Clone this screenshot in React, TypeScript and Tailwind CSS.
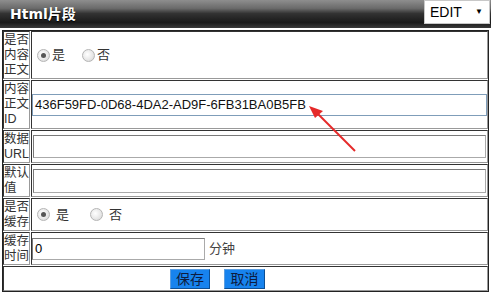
import React from 'react';

const cjk = { fontFamily: '"Liberation Sans", "Noto Sans CJK SC", sans-serif' };

const Radio: React.FC<{ checked?: boolean; className?: string }> = ({ checked, className }) => (
  <span className={`relative inline-flex h-[13px] w-[13px] shrink-0 items-center justify-center rounded-full border border-[#b5b5b5] bg-[radial-gradient(circle_at_40%_40%,#ffffff_0%,#e6e6e6_60%,#cfcfcf_100%)] ${className || ''}`}>
    {checked && <span className="h-[5px] w-[5px] rounded-full bg-[#555]" />}
  </span>
);

const Label: React.FC<{ lines: string[] }> = ({ lines }) => (
  <div className="flex w-[27px] shrink-0 flex-col justify-center overflow-hidden whitespace-nowrap border border-t-[#333] border-l-[#333] border-b-[#999] border-r-[#999] text-[12.5px] leading-[15px] text-[#333]">
    {lines.map((l) => (
      <span key={l}>{l}</span>
    ))}
  </div>
);

const Cell: React.FC<{ children?: React.ReactNode; className?: string }> = ({ children, className }) => (
  <div className={`flex flex-1 items-center border border-t-[#333] border-l-[#333] border-b-[#999] border-r-[#999] ${className || ''}`}>
    {children}
  </div>
);

const inputCls = 'border border-[#aaa] border-t-[#7a7a7a] border-l-[#7a7a7a] bg-white';

export default function App() {
  return (
    <div className="relative h-[294px] w-[491px] overflow-hidden bg-white" style={cjk}>
      <div className="flex h-[28px] items-start justify-between bg-[linear-gradient(to_bottom,#8e8e8e_0%,#6a6a6a_30%,#333_48%,#1a1a1a_80%,#3a3a3a_100%)]">
        <span
          className="ml-[10px] mt-[6px] text-[14px] font-bold leading-[16px] text-white [text-shadow:0_1px_1px_#000]"
          style={{ fontFamily: '"DejaVu Sans", "Noto Sans CJK SC", sans-serif' }}
        >
          Html片段
        </span>
        <div className="mr-[1px] flex h-[24px] w-[66px] items-center border border-[#c8c8c8] bg-white pl-[5px]">
          <span className="text-[14px] leading-[16px] text-black">EDIT</span>
          <span className="ml-[13px] text-[8px] leading-[8px] text-black">▼</span>
        </div>
      </div>

      <div className="mx-[2px] mt-[2px] flex w-[487px] flex-col gap-[1px] border border-[#222]">
        <div className="flex h-[48px] gap-[1px]">
          <Label lines={['是否', '内容', '正文']} />
          <Cell className="pl-[5px] text-[13px] text-[#333]">
            <Radio checked />
            <span className="ml-[2px]">是</span>
            <Radio className="ml-[17px]" />
            <span className="ml-[2px]">否</span>
          </Cell>
        </div>

        <div className="flex h-[49px] gap-[1px]">
          <Label lines={['内容', '正文', 'ID']} />
          <Cell>
            <div className="flex h-[22px] w-full items-center border border-[#7f9db9] bg-white pl-[2px] text-[13px] text-[#111]">
              436F59FD-0D68-4DA2-AD9F-6FB31BA0B5FB
            </div>
          </Cell>
        </div>

        <div className="flex h-[33px] gap-[1px]">
          <Label lines={['数据', 'URL']} />
          <Cell className="px-[1px]">
            <div className={`h-[23px] w-full ${inputCls}`} />
          </Cell>
        </div>

        <div className="flex h-[33px] gap-[1px]">
          <Label lines={['默认', '值']} />
          <Cell className="px-[1px]">
            <div className={`h-[24px] w-full ${inputCls}`} />
          </Cell>
        </div>

        <div className="flex h-[33px] gap-[1px]">
          <Label lines={['是否', '缓存']} />
          <Cell className="pl-[5px] text-[13px] text-[#333]">
            <Radio checked />
            <span className="ml-[6px]">是</span>
            <Radio className="ml-[21px]" />
            <span className="ml-[6px]">否</span>
          </Cell>
        </div>

        <div className="flex h-[33px] gap-[1px]">
          <Label lines={['缓存', '时间']} />
          <Cell>
            <div className={`flex h-[22px] w-[173px] items-center pl-[2px] text-[13px] text-black ${inputCls}`}>0</div>
            <span className="ml-[4px] text-[13px] text-[#444]">分钟</span>
          </Cell>
        </div>

        <div className="flex h-[25px]">
          <Cell className="pl-[166px]">
            <button className="h-[20px] w-[40px] border border-[#5c9ee0] border-b-[#0c4f95] border-r-[#0c4f95] bg-[#1783ee] text-[14px] leading-[16px] text-[#0e1c40]">
              保存
            </button>
            <button className="ml-[14px] h-[20px] w-[41px] border border-[#5c9ee0] border-b-[#0c4f95] border-r-[#0c4f95] bg-[#1783ee] text-[14px] leading-[16px] text-[#0e1c40]">
              取消
            </button>
          </Cell>
        </div>
      </div>

      <svg className="pointer-events-none absolute left-0 top-0" width="491" height="294">
        <line x1="355" y1="151" x2="316" y2="112" stroke="#e52a2a" strokeWidth="2" />
        <polygon points="309,106 323,111 315,118" fill="#e52a2a" />
      </svg>
    </div>
  );
}
